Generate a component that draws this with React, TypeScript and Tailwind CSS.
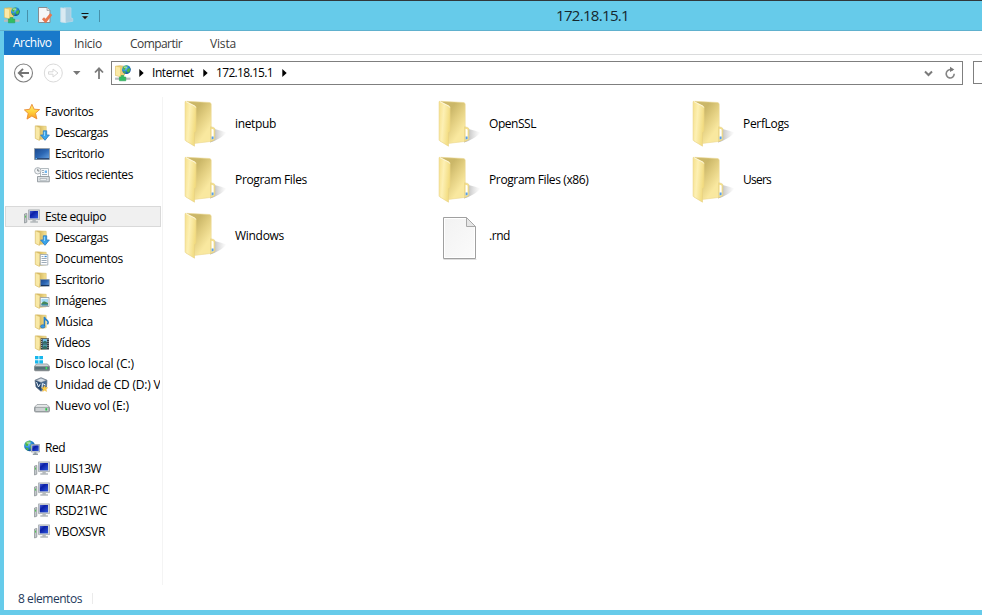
import { useLayoutEffect, useRef, useState, type ReactNode } from "react";

/** Single-line label whose tracking is adjusted to a given text width. */
function Label({ text, width, className = "" }: { text: string; width: number; className?: string }) {
  const ref = useRef<HTMLSpanElement>(null);
  const [spacing, setSpacing] = useState(0);
  useLayoutEffect(() => {
    const el = ref.current;
    if (!el) return;
    el.style.letterSpacing = "0px";
    const natural = el.getBoundingClientRect().width;
    const value = (width - natural) / text.length;
    el.style.letterSpacing = `${value}px`;
    setSpacing(value);
  }, [text, width]);
  return (
    <span ref={ref} className={`whitespace-pre ${className}`} style={{ letterSpacing: spacing }}>
      {text}
    </span>
  );
}

function Defs() {
  return (
    <svg width="0" height="0" className="absolute">
      <defs>
        <linearGradient id="flap" x1="0" y1="0" x2="1" y2="0.3">
          <stop offset="0" stopColor="#f6e08a" />
          <stop offset="0.45" stopColor="#fdf0b4" />
          <stop offset="1" stopColor="#f2dc80" />
        </linearGradient>
        <linearGradient id="back" gradientUnits="userSpaceOnUse" x1="11" y1="12" x2="28" y2="24">
          <stop offset="0" stopColor="#cbb768" />
          <stop offset="0.45" stopColor="#e2ce80" />
          <stop offset="1" stopColor="#f9e89f" />
        </linearGradient>
        <linearGradient id="shade" x1="0" y1="0" x2="1" y2="0">
          <stop offset="0" stopColor="#777" stopOpacity="0.65" />
          <stop offset="1" stopColor="#aaa" stopOpacity="0" />
        </linearGradient>
        <linearGradient id="screen" x1="0" y1="0" x2="1" y2="1">
          <stop offset="0" stopColor="#4a62d8" />
          <stop offset="0.35" stopColor="#0b1fa6" />
          <stop offset="1" stopColor="#2f58dd" />
        </linearGradient>
        <linearGradient id="desk" x1="0" y1="0" x2="1" y2="1">
          <stop offset="0" stopColor="#1c4789" />
          <stop offset="0.5" stopColor="#2c67b4" />
          <stop offset="1" stopColor="#6aa6e4" />
        </linearGradient>
        <linearGradient id="smallBack" x1="0" y1="0" x2="1" y2="0">
          <stop offset="0" stopColor="#c9a94c" />
          <stop offset="1" stopColor="#f6e294" />
        </linearGradient>
        <linearGradient id="drive" x1="0" y1="0" x2="0" y2="1">
          <stop offset="0" stopColor="#e4e8ea" />
          <stop offset="0.5" stopColor="#aeb6ba" />
          <stop offset="1" stopColor="#71797d" />
        </linearGradient>
        <radialGradient id="globe" cx="0.35" cy="0.3" r="0.75">
          <stop offset="0" stopColor="#8dd3fa" />
          <stop offset="0.5" stopColor="#278bd6" />
          <stop offset="1" stopColor="#0a4593" />
        </radialGradient>
        <linearGradient id="star" x1="0" y1="0" x2="0" y2="1">
          <stop offset="0" stopColor="#fff07a" />
          <stop offset="0.5" stopColor="#ffd23c" />
          <stop offset="1" stopColor="#f99a24" />
        </linearGradient>
        <linearGradient id="sheet" x1="0" y1="0" x2="1" y2="1">
          <stop offset="0" stopColor="#f2f2f2" />
          <stop offset="1" stopColor="#fbfbfb" />
        </linearGradient>
      </defs>
    </svg>
  );
}

function BigFolder() {
  return (
    <svg width="44" height="48" viewBox="0 0 44 48" className="block">
      <path d="M26 41.5 L30.5 29 Q36 30 42.5 32.5 Q37 39 26 42.5Z" fill="url(#shade)" />
      <path d="M2.5 1.3 L25.5 2.5 Q27.2 2.7 27.2 4.4 V41.4 L10.5 43.4Z" fill="url(#back)" stroke="#ecd994" strokeWidth=".6" />
      <path d="M26.6 26.8 L29.6 27.4 Q30.8 27.8 30.8 29 V38.8 Q30.8 39.8 30 40.2 L26.6 41.6Z" fill="#f4e08c" stroke="#e3cd80" strokeWidth=".5" />
      <path d="M27.6 29.5 Q27.6 28.9 28.2 28.9 Q29.6 29 29.6 30 V38.9 L27.6 39.4Z" fill="#fff" />
      <path d="M27.6 36.6 H29.6 V38.9 L27.6 39.4Z" fill="#5a9fe6" />
      <path d="M1.1 2 Q1.1 1 2.1 1.4 L11 5.9 Q12.1 6.5 12.1 7.8 V31.5 L10.5 32.6 V46.2 L1.8 40.9 Q1.1 40.4 1.1 39.6Z" fill="url(#flap)" stroke="#e8d082" strokeWidth=".6" />
      <path d="M2 1.6 L11 6.2 L11.8 7.6" fill="none" stroke="#fffbe6" strokeWidth=".9" />
    </svg>
  );
}

function BlankFile() {
  return (
    <svg width="44" height="48" viewBox="0 0 44 48" className="block">
      <path d="M5.5 47.5 H38.5" stroke="#bbb" strokeWidth=".8" opacity=".6" />
      <path d="M5.5 5.5 H28.5 L37.5 14.5 V46.5 H5.5Z" fill="url(#sheet)" stroke="#a0a0a0" />
      <path d="M6.5 6.5 H28 L36.5 15 V45.5 H6.5Z" fill="none" stroke="#fff" />
      <path d="M28.5 5.5 V14.5 H37.5Z" fill="#e6e6e6" stroke="#a8a8a8" />
    </svg>
  );
}

function Monitor() {
  return (
    <>
      <path d="M.5 5 L2.8 4.4 V13.2 L.5 14Z" fill="#c3c8cb" stroke="#858c90" strokeWidth=".7" />
      <path d="M1.6 6.6 V8.6" stroke="#4cc94c" strokeWidth="1" />
      <path d="M4.5 .9 H15.6 V10.6 H4.5Z" fill="#d3d7da" stroke="#a3a9ad" strokeWidth=".8" />
      <path d="M5.8 2 H14 V9.4 H5.8Z" fill="url(#screen)" />
      <path d="M8.4 10.9 H11.8 V12.2 H14 V13.8 H6.3 V12.2 H8.4Z" fill="#b4b9bc" />
    </>
  );
}

function Globe({ cx, cy, r }: { cx: number; cy: number; r: number }) {
  return (
    <g transform={`translate(${cx} ${cy}) scale(${r / 5})`}>
      <circle r="5" fill="url(#globe)" />
      <path d="M-4 -2.5 Q-2 -5 1 -4.6 L1 -3 L-1 -1.6 L-1.5 .3 L-3.5 0Z M1.5 -1 L4.3 -1.5 Q4.8 1 3 3.2 L1.4 3 L.4 1Z M-3.3 1.5 L-1 2.3 L-1.2 4.5 Q-3 3.8 -3.6 2.2Z" fill="#4cb840" />
      <ellipse cx="-1" cy="-2.8" rx="2" ry="1.1" fill="#fff" opacity=".45" />
    </g>
  );
}

function SmallFolder({ children }: { children?: ReactNode }) {
  return (
    <>
      <path d="M2.5 .8 L12.2 1.3 V13.8 L5 14.5Z" fill="url(#smallBack)" stroke="#dbc06c" strokeWidth=".6" />
      <path d="M1.3 .8 L6 2.6 V10.8 L5.4 15.4 L1.3 13.4Z" fill="#f9e9a6" stroke="#d9bd6a" strokeWidth=".7" />
      {children}
    </>
  );
}

type IconName = "star" | "downloads" | "desktop" | "recent" | "pc" | "documents" | "deskFolder" | "pictures" | "music" | "videos" | "disk" | "cd" | "volume" | "network";

function SmallIcon({ name }: { name: IconName }) {
  return (
    <svg width="16" height="16" viewBox="0 0 16 16" className="block shrink-0">
      {name === "star" && <path d="M7.9 .3 L10.1 5.2 L15.6 5.6 L11.5 9.2 L12.9 14.9 L7.9 12 L3 15.1 L4.2 9.4 L.4 5.9 L5.6 5.3Z" fill="url(#star)" stroke="#ea8c34" strokeWidth=".9" strokeLinejoin="round" />}
      {name === "downloads" && (
        <SmallFolder>
          <path d="M9.3 5.8 H12.7 V10 H15.4 L11 15.3 L6.6 10 H9.3Z" fill="#3ba5ea" stroke="#2a78c0" strokeWidth=".8" />
          <path d="M10.4 6.7 V11" stroke="#9adaff" strokeWidth="1" />
        </SmallFolder>
      )}
      {name === "desktop" && (
        <>
          <path d="M.5 2.5 H15.5 V13.5 H.5Z" fill="url(#desk)" stroke="#95a0ac" />
          <path d="M1 12 H15 V13.3 H1Z" fill="#2b4a78" />
          <path d="M1.5 12.6 H3" stroke="#6bc2ff" />
        </>
      )}
      {name === "recent" && (
        <>
          <path d="M6.5 1.5 H14.5 V10.5 H6.5Z" fill="#f7fafc" stroke="#a1a9af" strokeWidth=".8" />
          <path d="M8 3.5 H10 M8 5.5 H10 M8 7.5 H13" stroke="#8899a8" strokeWidth=".8" />
          <path d="M10.7 3.5 H13 V6 H10.7Z" fill="#6fb5ef" />
          <path d="M3.5 9.5 H15.3 V14.8 H3.5Z" fill="#dce1e4" stroke="#848c92" strokeWidth=".8" />
          <path d="M6 11.5 H12.7 V13.2 H6Z" fill="#fff" stroke="#949ca2" strokeWidth=".6" />
          <circle cx="3.8" cy="3.8" r="3.2" fill="#f2f4f6" stroke="#9aa2a8" strokeWidth=".8" />
          <path d="M3.8 1.8 V4 H5.5" fill="none" stroke="#5a646c" strokeWidth=".8" />
        </>
      )}
      {name === "pc" && <Monitor />}
      {name === "documents" && (
        <SmallFolder>
          <path d="M6.3 3.5 H13.8 V14 H6.3Z" fill="#fff" stroke="#96a2ad" strokeWidth=".8" />
          <path d="M7.5 5.5 H9.5 M7.5 7.5 H12.7 M7.5 9.5 H12.7 M7.5 11.5 H12.7" stroke="#8495a7" strokeWidth=".8" />
          <path d="M10.5 5.5 H12.7" stroke="#3f8ed4" strokeWidth="1.4" />
        </SmallFolder>
      )}
      {name === "deskFolder" && (
        <SmallFolder>
          <path d="M6.5 7.5 H15.3 V14.2 H6.5Z" fill="url(#desk)" stroke="#8794a2" strokeWidth=".7" />
          <path d="M7 13.4 H15" stroke="#132d55" />
        </SmallFolder>
      )}
      {name === "pictures" && (
        <SmallFolder>
          <path d="M6.3 4.5 H15 V13.5 H6.3Z" fill="#fff" stroke="#8f979e" strokeWidth=".8" />
          <path d="M7.4 5.8 H14 V9 H7.4Z" fill="#a2daf7" />
          <path d="M7.4 12.4 V10 L10 8.3 L14 9.7 V12.4Z" fill="#44885c" />
          <path d="M7.4 11.2 H14 V12.4 H7.4Z" fill="#3f8bb4" />
        </SmallFolder>
      )}
      {name === "music" && (
        <SmallFolder>
          <path d="M10.4 12 V3 Q11 5.3 13.2 6.5 Q15 8 13.4 10.4" fill="none" stroke="#257fcb" strokeWidth="1.5" />
          <ellipse cx="8.8" cy="12.4" rx="2.2" ry="1.7" fill="#3c9ae5" stroke="#1765a9" strokeWidth=".6" />
        </SmallFolder>
      )}
      {name === "videos" && (
        <SmallFolder>
          <path d="M6.7 3.3 H15 V14.5 H6.7Z" fill="#333b43" />
          <path d="M8.7 4 H13 V8.5 H8.7Z" fill="#73bdea" />
          <path d="M8.7 9.4 H13 V14 H8.7Z" fill="#4ba0ad" />
          <path d="M8.7 7 L11 5.7 L13 7 V8.5 H8.7Z M8.7 12 L11 10.8 L13 12 V14 H8.7Z" fill="#326d62" />
          <path d="M7.7 4 V14 M14 4 V14" stroke="#dce2e6" strokeWidth=".8" strokeDasharray="1 1" />
        </SmallFolder>
      )}
      {name === "disk" && (
        <>
          <path d="M2.5 8 H13.5 L15.5 10.3 V14 Q15.5 14.8 14.5 14.8 H1.5 Q.5 14.8 .5 14 V10.3Z" fill="url(#drive)" stroke="#737b80" strokeWidth=".7" />
          <path d="M1 10.6 H15 V13.7 H1Z" fill="#557078" stroke="#788186" strokeWidth=".5" />
          <path d="M11.6 11 H13.2 V13.3 H11.6Z" fill="#3fe05e" />
          <path d="M1 0 H4.5 V3.3 H1Z M5.3 0 H9 V3.3 H5.3Z M1 4.2 H4.5 V7.6 H1Z M5.3 4.2 H9 V7.6 H5.3Z" fill="#18b7ec" />
        </>
      )}
      {name === "volume" && (
        <>
          <path d="M3 6.6 H13 L15.5 9.2 V13 Q15.5 14 14.3 14 H1.7 Q.5 14 .5 13 V9.2Z" fill="#eceeef" stroke="#8f9598" strokeWidth=".8" />
          <path d="M1 9.3 H15 V12.8 Q15 13.5 14 13.5 H2 Q1 13.5 1 12.8Z" fill="#cdd1d3" stroke="#7f8689" strokeWidth=".7" />
          <path d="M11.4 10.2 H13.2 V12.5 H11.4Z" fill="#25c545" />
        </>
      )}
      {name === "cd" && (
        <>
          <path d="M7 .7 L13 3.2 L12.5 10 L7 14.3 L2 10 L1 3.2Z" fill="#8f9ba9" stroke="#5d6c7d" strokeWidth=".7" />
          <path d="M1.4 3.4 L7 5.8 V14 L2.3 9.7Z" fill="#27486f" />
          <path d="M7 5.8 L12.7 3.4 L12.2 9.8 L7 14Z" fill="#476b91" />
          <path d="M3 3.2 L7 1.4 L11.3 3.2 L7 5Z" fill="#d7dfe6" />
          <path d="M2.5 5 L4.5 10 L6.3 6.8 M8 11 L8.5 6.5 L11.5 8" fill="none" stroke="#e4edf5" strokeWidth="1" />
          <path d="M10.6 8.6 L11.5 10.4 L13.8 10.7 L12.1 12.2 L12.6 14.5 L10.6 13.3 L8.6 14.5 L9.1 12.2 L7.4 10.7 L9.7 10.4Z" fill="#ffd043" stroke="#e8a838" strokeWidth=".4" />
        </>
      )}
      {name === "network" && (
        <>
          <Globe cx={5.5} cy={5.8} r={5.4} />
          <path d="M7.2 4.5 H15.6 V12 H7.2Z" fill="#d8dde1" stroke="#8c969d" strokeWidth=".7" />
          <path d="M8.2 5.4 H14.7 V11 H8.2Z" fill="url(#screen)" />
          <path d="M10.3 12.2 H12.5 V13.5 H14 V15 H8.8 V13.5 H10.3Z" fill="#929da3" />
        </>
      )}
    </svg>
  );
}

function FtpIcon() {
  return (
    <svg width="17" height="17" viewBox="0 0 17 17" className="block shrink-0">
      <path d="M.5 1.2 L5 .7 L9.5 1.2 V10 L5 11.6 L.5 10.4Z" fill="#edcf74" stroke="#d3b45c" strokeWidth=".6" />
      <path d="M.7 1.4 L5 2.5 V11.3 L.7 10.2Z" fill="#fbeaa6" />
      <path d="M0 12.6 H15.5 V14.8 H0Z" fill="#b6bcbe" />
      <path d="M6.2 10.5 H8.8 V12 H10.8 V15.8 H4.4 V12 H6.2Z" fill="#33bd62" stroke="#279c50" strokeWidth=".5" />
      <Globe cx={11.4} cy={4.6} r={4.4} />
    </svg>
  );
}

type NavRow = { label: string; w: number; icon: IconName; head?: boolean; selected?: boolean } | null;

const nav: NavRow[] = [
  { label: "Favoritos", w: 48.5, icon: "star", head: true },
  { label: "Descargas", w: 53, icon: "downloads" },
  { label: "Escritorio", w: 49, icon: "desktop" },
  { label: "Sitios recientes", w: 78, icon: "recent" },
  null,
  { label: "Este equipo", w: 61, icon: "pc", head: true, selected: true },
  { label: "Descargas", w: 53, icon: "downloads" },
  { label: "Documentos", w: 68, icon: "documents" },
  { label: "Escritorio", w: 49, icon: "deskFolder" },
  { label: "Imágenes", w: 51, icon: "pictures" },
  { label: "Música", w: 38, icon: "music" },
  { label: "Vídeos", w: 35, icon: "videos" },
  { label: "Disco local (C:)", w: 79, icon: "disk" },
  { label: "Unidad de CD (D:) V", w: 105.5, icon: "cd" },
  { label: "Nuevo vol (E:)", w: 74, icon: "volume" },
  null,
  { label: "Red", w: 20, icon: "network", head: true },
  { label: "LUIS13W", w: 46, icon: "pc" },
  { label: "OMAR-PC", w: 55, icon: "pc" },
  { label: "RSD21WC", w: 52, icon: "pc" },
  { label: "VBOXSVR", w: 50, icon: "pc" },
];

const files = [
  { name: "inetpub", w: 41 },
  { name: "OpenSSL", w: 47 },
  { name: "PerfLogs", w: 46 },
  { name: "Program Files", w: 72 },
  { name: "Program Files (x86)", w: 99.5 },
  { name: "Users", w: 28 },
  { name: "Windows", w: 49 },
  { name: ".rnd", w: 21, file: true },
];

function TitleBar() {
  return (
    <header className="flex h-[31px] shrink-0 items-center border-t border-b border-t-[#30373b] border-b-[#60b1ce] bg-[#66cbea]">
      <div className="flex w-[120px] items-center pl-1">
        <FtpIcon />
        <span className="ml-[6px] h-3 w-px bg-[#4790aa]" />
        <svg width="16" height="17" viewBox="0 0 16 17" className="ml-[9px] block">
          <path d="M1.5 .5 H10 L13 3.5 V15.5 H1.5Z" fill="#f5f6f7" stroke="#878d91" />
          <path d="M10 .5 V3.5 H13" fill="#ddd" stroke="#999" strokeWidth=".7" />
          <path d="M6 11.2 L8.6 14 L14.2 7.2" fill="none" stroke="#e7774f" strokeWidth="2.8" />
        </svg>
        <svg width="14" height="17" viewBox="0 0 14 17" className="ml-[7px] block">
          <path d="M4 .8 L11 .8 V11 L12.8 11.5 V14.3 L5 15.5Z" fill="#a9cde0" stroke="#bcdae8" strokeWidth=".7" />
          <path d="M.7 .7 L5.5 1.5 V15.7 L.7 15Z" fill="#d9eaf2" stroke="#c9e0eb" strokeWidth=".7" />
        </svg>
        <svg width="8" height="8" viewBox="0 0 8 8" className="ml-[7px] block">
          <path d="M.5 1.5 H7.5" stroke="#111" strokeWidth="1" />
          <path d="M.5 4 H7.5 L4 7.5Z" fill="#111" stroke="#d9f2fa" strokeWidth=".4" />
        </svg>
        <span className="ml-[10px] h-3 w-px bg-[#4790aa]" />
      </div>
      <div className="ml-[436px] -mt-[2px] text-[15px] leading-5 text-[#15272e]">
        <Label text="172.18.15.1" width={73} />
      </div>
    </header>
  );
}

function Ribbon() {
  return (
    <nav className="flex h-6 shrink-0 border-b border-[#dadbdc] text-[#3b3b3b]">
      <div className="-mb-px flex w-14 items-center bg-[#1979ca] pl-[9px] text-white">
        <Label text="Archivo" width={38.5} />
      </div>
      <div className="flex items-center pt-[2px] pl-[14px]"><Label text="Inicio" width={28} /></div>
      <div className="flex items-center pt-[2px] pl-[28px]"><Label text="Compartir" width={52} /></div>
      <div className="flex items-center pt-[2px] pl-[28px]"><Label text="Vista" width={26} /></div>
    </nav>
  );
}

function Crumb({ className = "" }: { className?: string }) {
  return (
    <svg width="5" height="8" viewBox="0 0 5 8" className={`block shrink-0 ${className}`}>
      <path d="M.3 0 L4.7 4 L.3 8Z" fill="#000" />
    </svg>
  );
}

function AddressBar() {
  return (
    <div className="flex h-[42px] shrink-0 pt-[6px]">
      <svg width="107" height="24" viewBox="0 0 107 24" className="block shrink-0">
        <circle cx="19.5" cy="12" r="9" fill="none" stroke="#808080" strokeWidth="1.1" />
        <path d="M25 12 H15.5 M19 7.8 L14.8 12 L19 16.2" fill="none" stroke="#747474" strokeWidth="1.9" />
        <circle cx="49.3" cy="12" r="9" fill="none" stroke="#dadada" strokeWidth="1" />
        <path d="M44.5 10.8 H49 V8 L54 12 L49 16 V13.2 H44.5Z" fill="none" stroke="#d8d8d8" strokeWidth="1" />
        <path d="M69 10 H76.5 L72.7 14Z" fill="#777" />
        <path d="M95 18 V8 M91 11.5 L95 7.3 L99 11.5" fill="none" stroke="#7b7b7b" strokeWidth="1.8" />
      </svg>
      <div className="flex h-6 w-[852px] shrink-0 items-center border border-[#7f7f7f] text-black">
        <div className="flex w-[18px] pl-[3px]"><FtpIcon /></div>
        <Crumb className="ml-[9px]" />
        <div className="ml-2 flex"><Label text="Internet" width={41.5} /></div>
        <Crumb className="ml-[9.5px]" />
        <div className="ml-2 flex"><Label text="172.18.15.1" width={57} /></div>
        <Crumb className="ml-[9px]" />
        <svg width="36" height="16" viewBox="0 0 36 16" className="mr-1 ml-auto block">
          <path d="M3 6.5 L6.5 10 L10 6.5" fill="none" stroke="#7a7a7a" strokeWidth="2" />
          <path d="M30.6 5.4 A4 4.2 0 1 0 32.2 8.8" fill="none" stroke="#858585" strokeWidth="1.6" />
          <path d="M28 1.8 L32.3 4.6 L28 7Z" fill="#7a7a7a" />
        </svg>
      </div>
      <div className="ml-[10px] h-[23px] flex-1 border border-r-0 border-[#7f7f7f]" />
    </div>
  );
}

export default function App() {
  return (
    <div className="flex h-[615px] w-[982px] flex-col overflow-hidden bg-[#66cbea] font-['Open_Sans','Noto_Sans',sans-serif] text-[12px] leading-[16px]">
      <Defs />
      <TitleBar />
      <div className="ml-1 flex h-[579px] flex-col bg-white">
        <Ribbon />
        <AddressBar />
        <main className="flex h-[488px] shrink-0">
          <aside className="w-[159px] shrink-0 overflow-hidden border-r border-[#f4f4f4] pt-1 pl-px">
            {nav.map((row, i) =>
              row ? (
                <div
                  key={i}
                  className={`flex h-[21px] w-[156px] items-center gap-[5px] overflow-hidden border text-black ${row.head ? "pl-[18px]" : "pl-[28px]"} ${row.selected ? "border-[#d9d9d9] bg-[#f0f0f0]" : "border-transparent"}`}
                >
                  <SmallIcon name={row.icon} />
                  <Label text={row.label} width={row.w} />
                </div>
              ) : (
                <div key={i} className="h-[21px]" />
              ),
            )}
          </aside>
          <section className="-mt-px ml-[21px] grid h-[168px] grid-cols-[254px_254px_254px] grid-rows-[56px_56px_56px]">
            {files.map((f) => (
              <div key={f.name} className="flex items-center gap-[7px] text-black">
                {f.file ? <BlankFile /> : <BigFolder />}
                <Label text={f.name} width={f.w} />
              </div>
            ))}
          </section>
        </main>
        <footer className="flex flex-1 items-center pt-[2px] pl-[14px] text-[#1e395b]">
          <Label text="8 elementos" width={64} />
          <span className="ml-[10px] h-[11px] w-px bg-[#ebebeb]" />
        </footer>
      </div>
    </div>
  );
}
